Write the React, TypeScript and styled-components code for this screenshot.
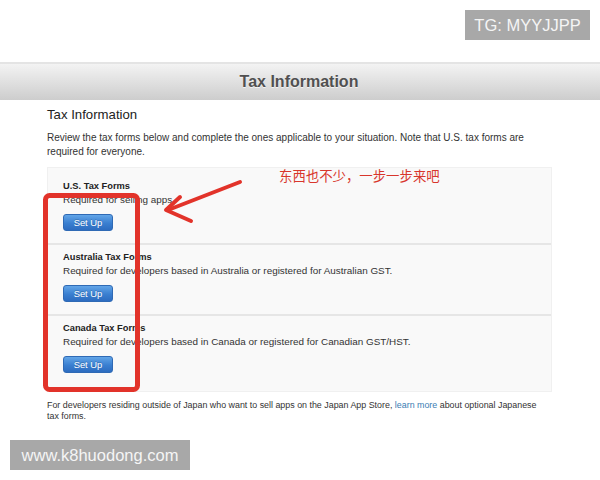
import styled, { createGlobalStyle } from 'styled-components'

const GlobalStyle = createGlobalStyle`
    html, body {
        margin: 0;
        padding: 0;
        background: #fff;
    }

    body {
        font-family: "Liberation Sans", Arial, sans-serif;
        color: #333;
    }
`

const Page = styled.div`
    position: relative;
    width: 600px;
    height: 480px;
    overflow: hidden;
    background: #fff;
`

const TopSpace = styled.div`
    height: 62px;
`

const HeaderBar = styled.div`
    align-items: center;
    background: linear-gradient(#f3f3f3 0%, #e2e2e2 45%, #cdcdcd 100%);
    border-top: 2px solid #e4e4e4;
    box-sizing: border-box;
    display: flex;
    height: 38px;
    justify-content: center;
`

const HeaderTitle = styled.h1`
    color: #505050;
    font-size: 16px;
    font-weight: bold;
    margin: 0;
    padding-right: 2px;
    text-shadow: 0 1px 0 rgba(255, 255, 255, 0.7);
`

const Content = styled.div`
    padding: 0 0 0 47px;
`

const SectionTitle = styled.h2`
    color: #222;
    font-size: 13.2px;
    font-weight: normal;
    line-height: 18px;
    margin: 6px 0 0;
`

const Intro = styled.p`
    font-size: 10px;
    line-height: 13.5px;
    margin: 7px 0 0;
    width: 490px;
`

const Panel = styled.div`
    background: #f9f9f9;
    border: 1px solid #f0f0f0;
    box-sizing: border-box;
    margin: 9px 0 0;
    padding: 6px 0;
    width: 505px;
`

const FormRow = styled.div`
    padding: 5px 15px 12px;

    & + & {
        border-top: 2px solid #e6e6e6;
    }
`

const FormTitle = styled.div`
    color: #222;
    font-size: 9.3px;
    font-weight: bold;
    line-height: 14px;
`

const FormDesc = styled.div`
    font-size: 9.9px;
    line-height: 14px;
`

const SetUpButton = styled.button`
    background: linear-gradient(#62a5e8, #3a7fd0 55%, #2d6cc0);
    border: 1px solid #2f6ab5;
    border-radius: 3px;
    box-sizing: border-box;
    color: #fff;
    display: block;
    font-family: "Liberation Sans", Arial, sans-serif;
    font-size: 9.4px;
    height: 17px;
    margin-top: 7px;
    padding: 0;
    text-shadow: 0 -1px 0 rgba(0, 0, 0, 0.2);
    width: 50px;
`

const Footnote = styled.p`
    font-size: 8.9px;
    line-height: 11px;
    margin: 7.5px 0 0;
    width: 502px;
`

const Link = styled.a`
    color: #3a7db3;
    text-decoration: none;
`

const Watermark = styled.div<{ $left: number; $top: number; $width: number }>`
    align-items: center;
    background: #a8a8a8;
    color: #f5f5f5;
    display: flex;
    font-family: "Liberation Sans", Arial, sans-serif;
    font-size: 16.5px;
    height: 30px;
    justify-content: center;
    left: ${(p) => p.$left}px;
    position: absolute;
    top: ${(p) => p.$top}px;
    width: ${(p) => p.$width}px;
`

const Markup = styled.svg`
    left: 0;
    pointer-events: none;
    position: absolute;
    top: 0;
`

const Note = styled.div`
    color: #d8362c;
    font-family: "Noto Sans CJK SC", sans-serif;
    font-size: 13.4px;
    left: 279px;
    line-height: 16px;
    position: absolute;
    top: 167px;
    white-space: nowrap;
`

const forms = [
    { title: 'U.S. Tax Forms', desc: 'Required for selling apps' },
    {
        title: 'Australia Tax Forms',
        desc: 'Required for developers based in Australia or registered for Australian GST.',
    },
    {
        title: 'Canada Tax Forms',
        desc: 'Required for developers based in Canada or registered for Canadian GST/HST.',
    },
]

const App = () => {
    return (
        <Page>
            <GlobalStyle />
            <TopSpace />
            <HeaderBar>
                <HeaderTitle>Tax Information</HeaderTitle>
            </HeaderBar>
            <Content>
                <SectionTitle>Tax Information</SectionTitle>
                <Intro>
                    Review the tax forms below and complete the ones applicable to your situation. Note that U.S. tax
                    forms are required for everyone.
                </Intro>
                <Panel>
                    {forms.map((f) => (
                        <FormRow key={f.title}>
                            <FormTitle>{f.title}</FormTitle>
                            <FormDesc>{f.desc}</FormDesc>
                            <SetUpButton>Set Up</SetUpButton>
                        </FormRow>
                    ))}
                </Panel>
                <Footnote>
                    For developers residing outside of Japan who want to sell apps on the Japan App Store,{' '}
                    <Link href="#">learn more</Link> about optional Japanese tax forms.
                </Footnote>
            </Content>

            {/* red annotation drawn over the page */}
            <Markup width="600" height="480" viewBox="0 0 600 480">
                <rect
                    x="45.5"
                    y="195.5"
                    width="92"
                    height="194"
                    rx="4"
                    fill="none"
                    stroke="#e2332a"
                    strokeWidth="5"
                />
                <g stroke="#e2332a" strokeWidth="4" strokeLinecap="round" strokeLinejoin="round" fill="none">
                    <path d="M240 182 L168 210" />
                    <path d="M180 197 L166 210 L191 221" />
                </g>
            </Markup>
            <Note>东西也不少，一步一步来吧</Note>

            <Watermark $left={465} $top={10} $width={125}>
                TG: MYYJJPP
            </Watermark>
            <Watermark $left={10} $top={440} $width={180}>
                www.k8huodong.com
            </Watermark>
        </Page>
    )
}

export default App
